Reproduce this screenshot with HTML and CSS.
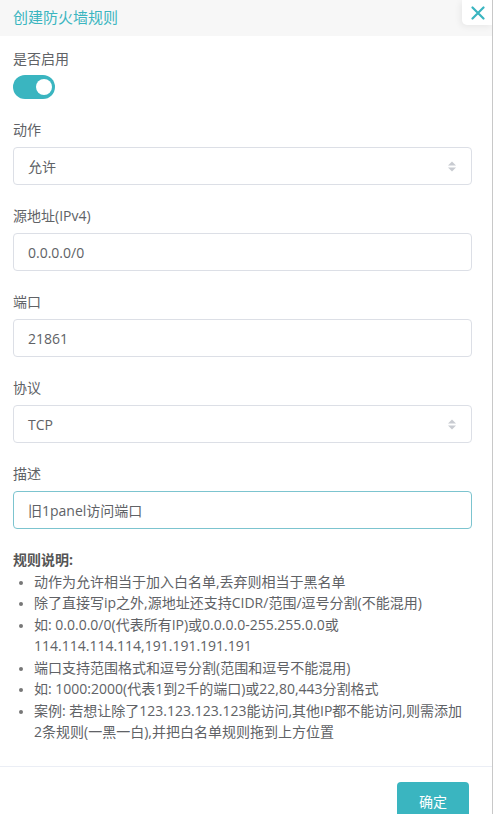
FILE: index.html
```html
<!DOCTYPE html>
<html lang="zh-CN">
  <head>
    <meta charset="UTF-8" />
    <meta name="viewport" content="width=device-width, initial-scale=1.0" />
    <title>创建防火墙规则</title>
    <link rel="stylesheet" href="styles.css">
  </head>
  <body>
    <div class="drawer">
      <div class="drawer-header">
        <span class="drawer-title">创建防火墙规则</span>
        <button class="close-btn" aria-label="关闭">
          <svg width="14" height="14" viewBox="0 0 14 14">
            <path d="M1.5 1.5 L12.5 12.5 M12.5 1.5 L1.5 12.5" stroke="#3ab5c0" stroke-width="2.2" stroke-linecap="round" fill="none" />
          </svg>
        </button>
      </div>

      <div class="drawer-body">
        <div class="form-item">
          <label class="form-label">是否启用</label>
          <span class="switch"><span class="switch-knob"></span></span>
        </div>

        <div class="form-item">
          <label class="form-label">动作</label>
          <div class="field select">
            <span>允许</span>
            <svg class="caret" width="8" height="11" viewBox="0 0 8 11">
              <path d="M0 4.5 L4 0.5 L8 4.5 Z M0 6.5 L4 10.5 L8 6.5 Z" fill="#c8cbd1" />
            </svg>
          </div>
        </div>

        <div class="form-item">
          <label class="form-label">源地址(IPv4)</label>
          <div class="field">0.0.0.0/0</div>
        </div>

        <div class="form-item">
          <label class="form-label">端口</label>
          <div class="field">21861</div>
        </div>

        <div class="form-item">
          <label class="form-label">协议</label>
          <div class="field select">
            <span>TCP</span>
            <svg class="caret" width="8" height="11" viewBox="0 0 8 11">
              <path d="M0 4.5 L4 0.5 L8 4.5 Z M0 6.5 L4 10.5 L8 6.5 Z" fill="#c8cbd1" />
            </svg>
          </div>
        </div>

        <div class="form-item">
          <label class="form-label">描述</label>
          <div class="field focused">旧1panel访问端口</div>
        </div>

        <div class="notes">
          <div class="notes-title">规则说明:</div>
          <ul>
            <li>动作为允许相当于加入白名单,丢弃则相当于黑名单</li>
            <li>除了直接写ip之外,源地址还支持CIDR/范围/逗号分割(不能混用)</li>
            <li>如: 0.0.0.0/0(代表所有IP)或0.0.0.0-255.255.0.0或114.114.114.114,191.191.191.191</li>
            <li>端口支持范围格式和逗号分割(范围和逗号不能混用)</li>
            <li>如: 1000:2000(代表1到2千的端口)或22,80,443分割格式</li>
            <li>案例: 若想让除了123.123.123.123能访问,其他IP都不能访问,则需添加2条规则(一黑一白),并把白名单规则拖到上方位置</li>
          </ul>
        </div>
      </div>

      <div class="drawer-footer">
        <button class="btn">确定</button>
      </div>
    </div>
  </body>
</html>
```

FILE: styles.css
```css
body {
  margin: 0;
  padding: 0;
  font-family: "Open Sans", "Noto Sans CJK SC", sans-serif;
  font-size: 14px;
  color: #606266;
  background-color: #fff;
}

.drawer {
  width: 492px;
  height: 814px;
  border-right: 1px solid #c8c8c8;
  overflow: hidden;
  position: relative;
}

.drawer-header {
  height: 36px;
  background-color: #f7f7f7;
  display: flex;
  align-items: center;
  padding-left: 13px;
}

.drawer-title {
  color: #3ab5c0;
  font-size: 15px;
  line-height: 20px;
  margin-top: -2px;
}

.close-btn {
  position: absolute;
  top: 0;
  right: -1px;
  width: 31px;
  height: 25px;
  border: none;
  background-color: #fff;
  border-radius: 0 0 0 5px;
  box-shadow: -2px 2px 6px rgba(0, 0, 0, 0.06);
  display: flex;
  align-items: center;
  justify-content: center;
  padding: 0;
}

.drawer-body {
  padding: 12px 20px 0 13px;
}

.form-item {
  margin-bottom: 20px;
}

.form-label {
  display: block;
  line-height: 22px;
  margin-bottom: 6px;
}

.switch {
  display: block;
  width: 42px;
  height: 24px;
  border-radius: 12px;
  background-color: #3ab5c0;
  position: relative;
  margin-top: -1px;
}

.switch-knob {
  position: absolute;
  top: 4px;
  right: 3px;
  width: 16px;
  height: 16px;
  border-radius: 50%;
  background-color: #fff;
}

.field {
  height: 38px;
  box-sizing: border-box;
  border: 1px solid #dcdfe6;
  border-radius: 4px;
  padding: 0 14px;
  display: flex;
  align-items: center;
  color: #606266;
}

.field.focused {
  border-color: #7cc4cf;
}

.select {
  justify-content: space-between;
}

.caret {
  margin-right: 1px;
}

.notes {
  margin-top: 4px;
  padding-bottom: 23px;
  line-height: 21.5px;
}

.notes-title {
  font-weight: bold;
  color: #555;
}

.notes ul {
  margin: 0;
  padding: 0 6px 0 21px;
}

.notes li::marker {
  color: #777;
  font-size: 12px;
}

.drawer-footer {
  border-top: 1px solid #ebeef5;
  padding: 15px 23px 0 0;
  display: flex;
  justify-content: flex-end;
}

.btn {
  width: 72px;
  height: 38px;
  border: none;
  border-radius: 4px;
  background-color: #3ab5c0;
  color: #fff;
  font-family: inherit;
  font-size: 14px;
}
```
